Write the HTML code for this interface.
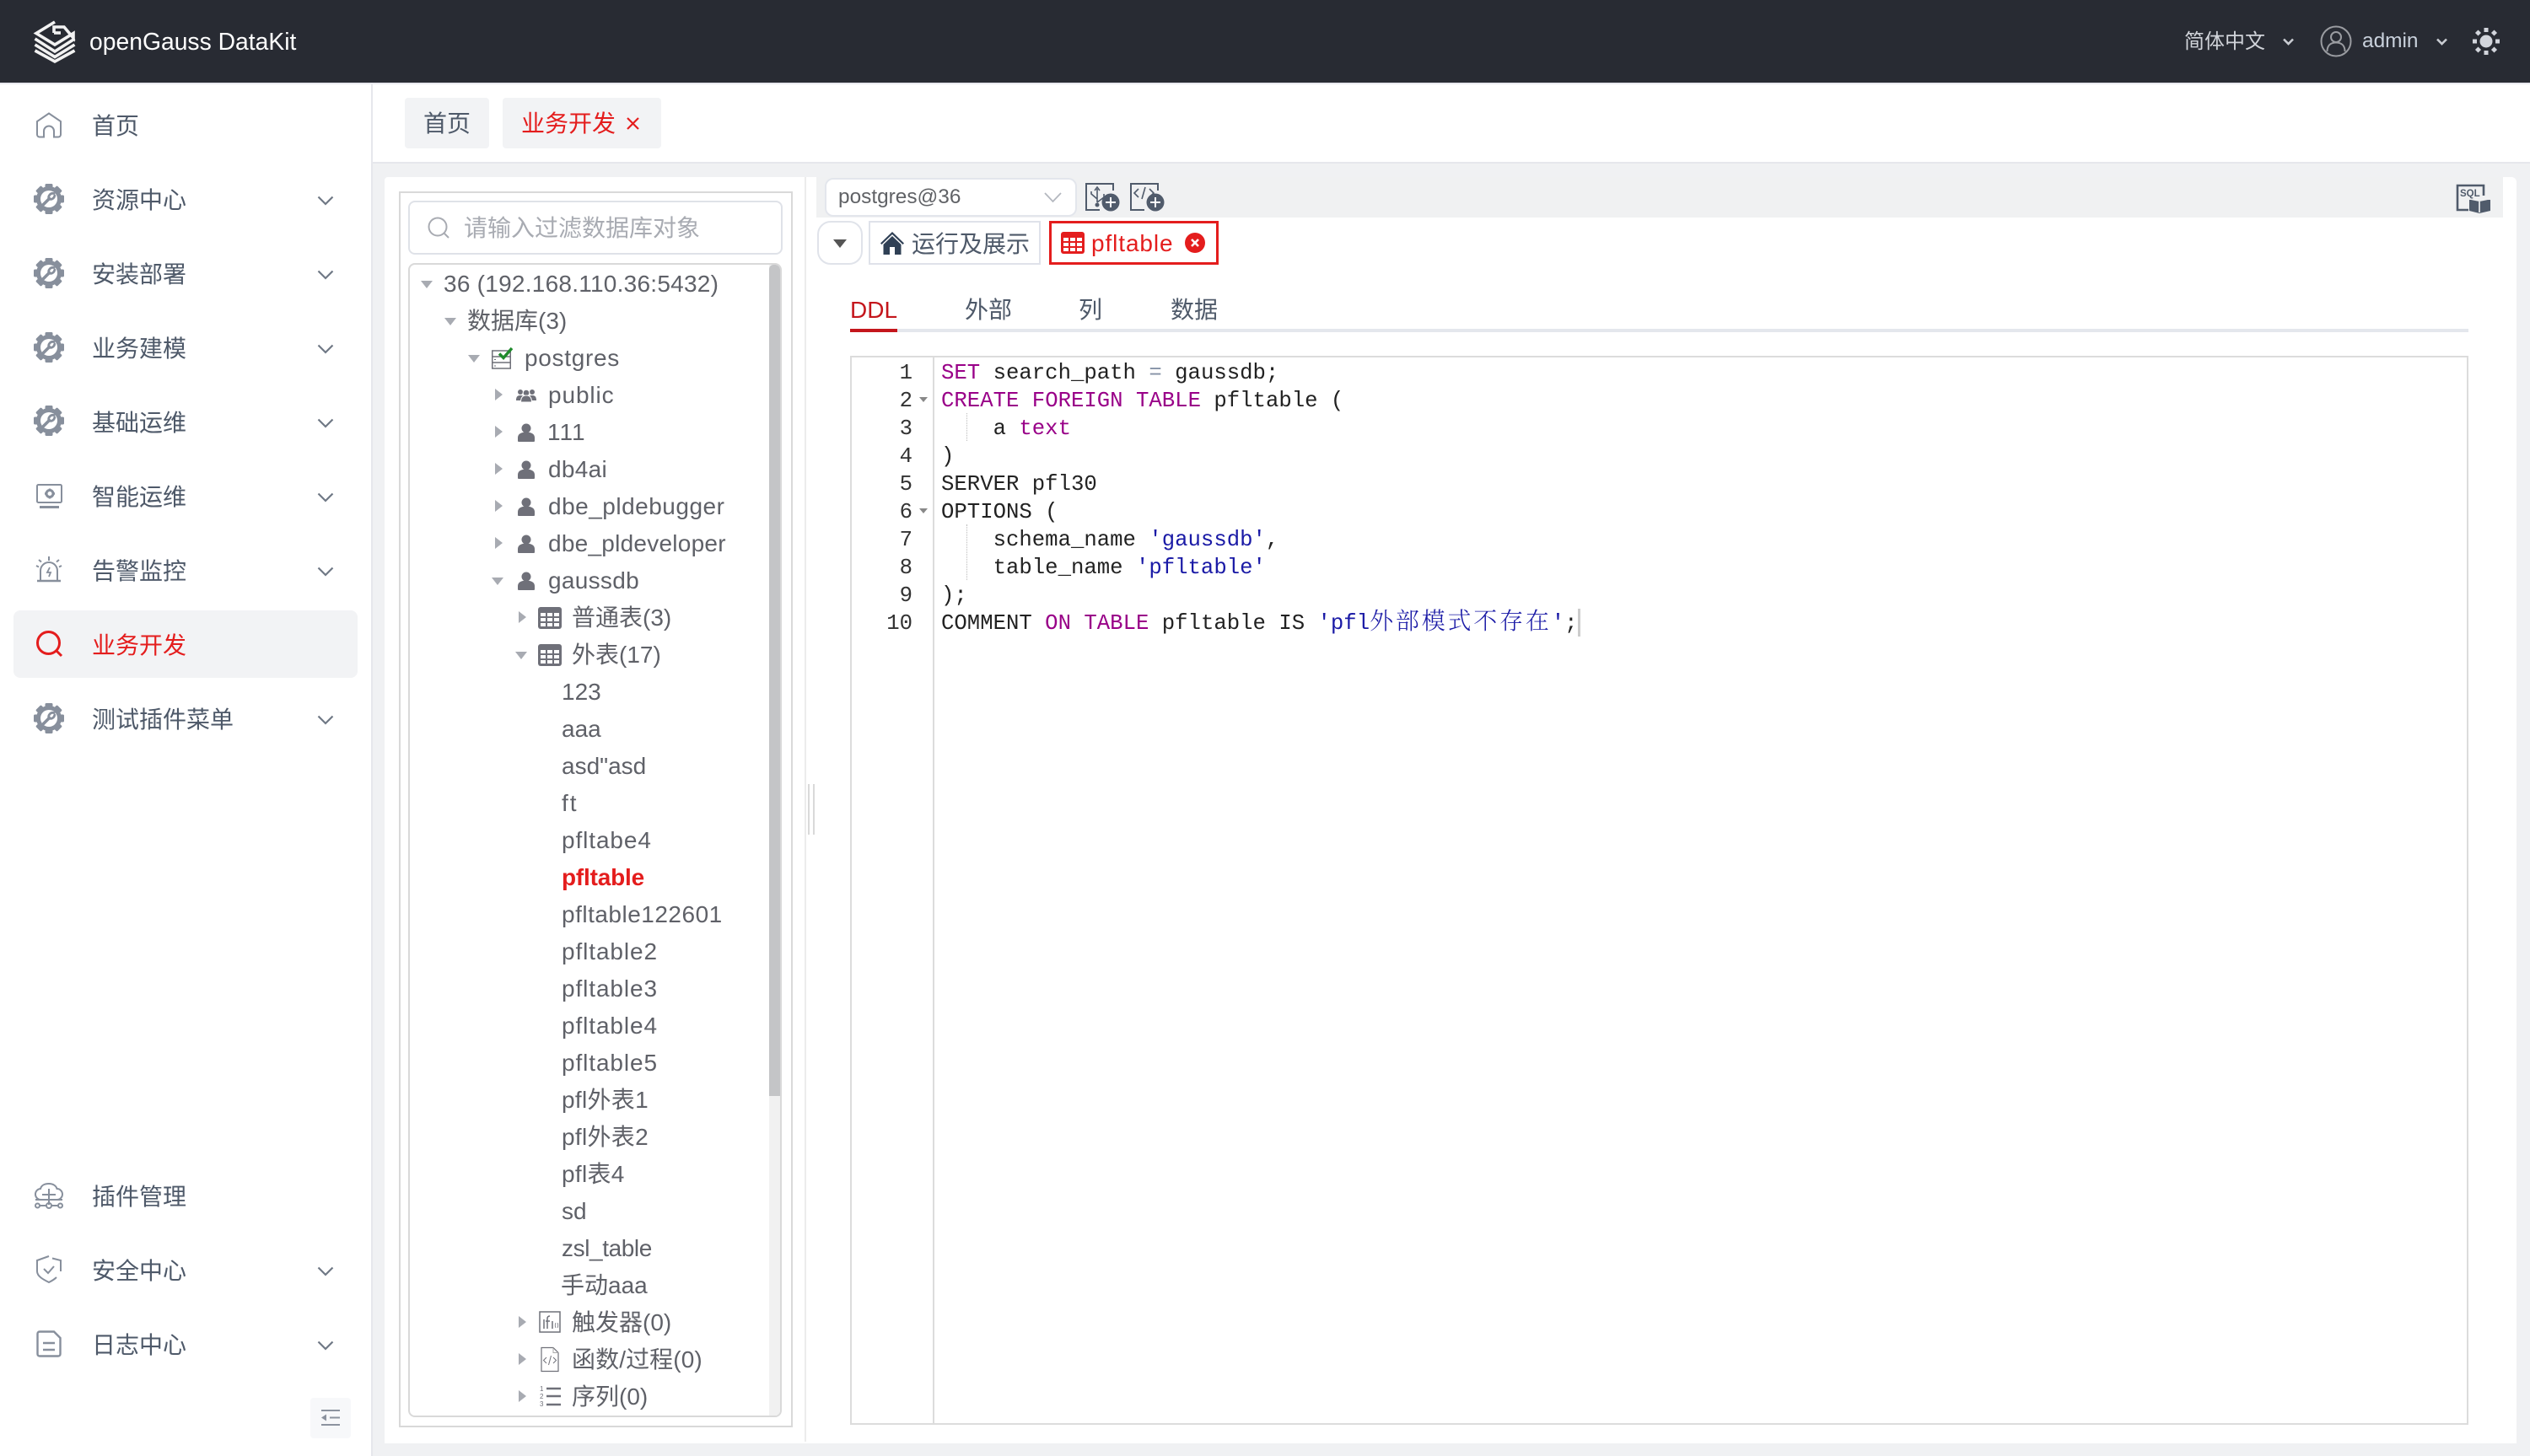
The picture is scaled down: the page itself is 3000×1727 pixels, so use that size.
<!DOCTYPE html>
<html lang="zh"><head><meta charset="utf-8"><title>openGauss DataKit</title>
<style>
*{box-sizing:border-box;margin:0;padding:0}
html,body{width:3000px;height:1727px;overflow:hidden;background:#f0f1f3;font-family:"Liberation Sans","Noto Sans CJK SC",sans-serif}
.a{position:absolute}
.t{position:absolute;white-space:nowrap;font-size:28px}
.m{left:109px;color:#4e5969;line-height:40px}
.r{color:#5f6168;line-height:44px}
.p{letter-spacing:.9px}
.dn{position:absolute;width:0;height:0;border-left:7px solid transparent;border-right:7px solid transparent;border-top:9px solid #a8abb2}
.rt{position:absolute;width:0;height:0;border-top:7.5px solid transparent;border-bottom:7.5px solid transparent;border-left:9px solid #a8abb2}
svg{position:absolute;overflow:visible}
pre{font-family:"Liberation Mono",monospace;font-size:25.67px;line-height:33px}
.k{color:#990088}.s{color:#1a1aa6}.o{color:#8592a6}
.z{font-family:"Noto Serif CJK SC",serif;font-size:28px;letter-spacing:2.8px;font-weight:300;line-height:0}
</style></head><body>
<svg width="0" height="0" style="position:absolute"><defs>
<symbol id="gear" viewBox="0 0 36 36"><g fill="#878f9c"><circle cx="18" cy="18" r="15"/><rect x="13.5" y="0" width="9" height="36" rx="1.5"/><rect x="13.5" y="0" width="9" height="36" rx="1.5" transform="rotate(45 18 18)"/><rect x="13.5" y="0" width="9" height="36" rx="1.5" transform="rotate(90 18 18)"/><rect x="13.5" y="0" width="9" height="36" rx="1.5" transform="rotate(135 18 18)"/></g><circle cx="18" cy="18" r="10" fill="#fff"/><path d="M11.5 24.5L18.5 17.5" stroke="#878f9c" stroke-width="3.6" fill="none" stroke-linecap="round"/><path d="M24 11.5a5 5 0 0 0-6 6.5M24.8 14a5 5 0 0 1-6.8 4" stroke="#878f9c" stroke-width="2.8" fill="none" stroke-linecap="round"/></symbol>
<symbol id="chev" viewBox="0 0 20 12"><path d="M1.5 1.5L10 10L18.5 1.5" fill="none" stroke="#6f7885" stroke-width="2.2"/></symbol>
<symbol id="user" viewBox="0 0 20 22"><circle cx="10" cy="6" r="5.5" fill="#6f7079"/><path d="M0 21v-4c0-4 4-6.500 10-6.500s10 2.500 10 6.500v4c0 .6-.5 1-1 1H1c-.5 0-1-.4-1-1z" fill="#6f7079"/></symbol>
<symbol id="tbl" viewBox="0 0 28 26"><rect width="28" height="26" rx="3" fill="#6f7079"/><g fill="#fff"><rect x="3" y="7" width="6" height="4"/><rect x="11" y="7" width="6" height="4"/><rect x="19" y="7" width="6" height="4"/><rect x="3" y="13" width="6" height="4"/><rect x="11" y="13" width="6" height="4"/><rect x="19" y="13" width="6" height="4"/><rect x="3" y="19" width="6" height="4"/><rect x="11" y="19" width="6" height="4"/><rect x="19" y="19" width="6" height="4"/></g></symbol>
</defs></svg>

<!-- header -->
<div class="a" style="left:0;top:0;width:3000px;height:98px;background:#282b33"></div>
<div class="a" style="left:0;top:98px;width:3000px;height:2px;background:#e8e9ee"></div>
<svg style="left:40px;top:24px" width="50" height="50" viewBox="0 0 50 50" fill="none" stroke="#f2f2f2" stroke-width="3.600">
<path d="M25 2L3 15.500L25 29L47 15.500V21L36 8H24V15"/><path d="M24 15H32"/>
<path d="M1.500 22L25 37L48.500 22"/><path d="M1.500 29L25 43.500L48.500 29"/><path d="M1.500 36L25 49L48.500 36"/></svg>
<div class="t" style="left:106px;top:27px;line-height:44px;color:#fff;font-size:28.3px">openGauss DataKit</div>
<div class="t" style="left:2590px;top:30px;line-height:40px;color:#d0d3d9;font-size:24px">简体中文</div>
<svg style="left:2707px;top:45px" width="13" height="9" viewBox="0 0 13 9"><path d="M1 1.500L6.500 7L12 1.500" fill="none" stroke="#c9ccd2" stroke-width="2.600"/></svg>
<svg style="left:2751px;top:30px" width="38" height="38" viewBox="0 0 38 38" fill="none" stroke="#9a9ca1" stroke-width="2"><circle cx="19" cy="19" r="17.500"/><circle cx="19" cy="14" r="6"/><path d="M8.500 31c0-7 4-10.500 10.500-10.500S29.500 24 29.500 31"/></svg>
<div class="t" style="left:2801px;top:29px;line-height:40px;color:#c9d1dc;font-size:24.4px">admin</div>
<svg style="left:2889px;top:45px" width="13" height="9" viewBox="0 0 13 9"><path d="M1 1.500L6.500 7L12 1.500" fill="none" stroke="#c9ccd2" stroke-width="2.600"/></svg>
<svg style="left:2932px;top:33px" width="32" height="32" viewBox="0 0 32 32" fill="#d2d5dc"><circle cx="16" cy="16" r="7.500"/><rect x="13.500" y="0" width="5" height="5"/><rect x="13.500" y="27" width="5" height="5"/><rect x="0" y="13.500" width="5" height="5"/><rect x="27" y="13.500" width="5" height="5"/><rect x="4" y="3.500" width="5" height="5" transform="rotate(45 6.500 6)"/><rect x="23" y="3.500" width="5" height="5" transform="rotate(45 25.500 6)"/><rect x="4" y="23.500" width="5" height="5" transform="rotate(45 6.500 26)"/><rect x="23" y="23.500" width="5" height="5" transform="rotate(45 25.500 26)"/></svg>

<!-- sidebar -->
<div class="a" style="left:0;top:100px;width:440px;height:1627px;background:#fff"></div>
<div class="a" style="left:440px;top:100px;width:2px;height:1627px;background:#e6e7ec"></div>
<div class="a" style="left:16px;top:724px;width:408px;height:80px;background:#f2f3f5;border-radius:8px"></div>

<svg style="left:43px;top:133px" width="30" height="31" viewBox="0 0 30 31" fill="none" stroke="#878f9c" stroke-width="2"><path d="M9 29.500H4c-1.500 0-3-1-3-3V11L15 1.500L29 11v15.500c0 2-1.500 3-3 3h-5v-7a6 6 0 0 0-12 0z"/></svg>
<svg style="left:40px;top:218px" width="36" height="36"><use href="#gear"/></svg>
<svg style="left:40px;top:306px" width="36" height="36"><use href="#gear"/></svg>
<svg style="left:40px;top:394px" width="36" height="36"><use href="#gear"/></svg>
<svg style="left:40px;top:481px" width="36" height="36"><use href="#gear"/></svg>
<svg style="left:43px;top:574px" width="31" height="30" viewBox="0 0 31 30" fill="none" stroke="#878f9c" stroke-width="2"><rect x="1" y="1" width="29" height="21" rx="1.500"/><path d="M4 27.500H27" stroke-width="3"/><circle cx="16" cy="11.500" r="4" stroke-width="3"/><path d="M16 5.500v2M16 15.500v2M10 11.500h2M20 11.500h2" stroke-width="2.400"/></svg>
<svg style="left:43px;top:660px" width="30" height="30" viewBox="0 0 30 30" fill="none" stroke="#878f9c" stroke-width="2"><path d="M15 0v5M3 4l3 2.500M27 4l-3 2.500M0 11l3 1.500M30 11l-3 1.500" stroke-width="2"/><path d="M5 28V17a10 10 0 0 1 20 0v11"/><path d="M1 29H29" stroke-width="2.500"/><path d="M16 13l-3 6h4l-2 5" stroke-width="1.800"/></svg>
<svg style="left:43px;top:748px" width="31" height="31" viewBox="0 0 31 31" fill="none" stroke="#e41d1d" stroke-width="3"><circle cx="14.500" cy="14.500" r="13"/><path d="M24 24L30 30"/></svg>
<svg style="left:40px;top:834px" width="36" height="36"><use href="#gear"/></svg>
<svg style="left:41px;top:1403px" width="34" height="31" viewBox="0 0 34 31" fill="none" stroke="#878f9c" stroke-width="2"><path d="M9 20H8a6.500 6.500 0 0 1-1-13c1-4 5-6 10-6 5 0 8.500 2.500 9.500 6a6.500 6.500 0 0 1 0 13H25"/><path d="M17 7v19M9 14H25M1 20H33"/><circle cx="17" cy="27" r="3"/><circle cx="3.500" cy="27" r="2.500"/><circle cx="30.500" cy="27" r="2.500"/><path d="M6 27H14M20 27H28"/></svg>
<svg style="left:43px;top:1489px" width="30" height="33" viewBox="0 0 30 33" fill="none" stroke="#878f9c" stroke-width="2"><path d="M15 1L1 6v13c0 6 8 10 14 13 3-1.500 6-3 9-6"/><path d="M19 3.500L29 6v13"/><path d="M9 16l5 5 7-8"/></svg>
<svg style="left:43px;top:1578px" width="30" height="32" viewBox="0 0 30 32" fill="none" stroke="#878f9c" stroke-width="2.400"><path d="M21 1.500H4c-1.500 0-2.500 1-2.500 2.500v24c0 1.500 1 2.500 2.500 2.500h22c1.500 0 2.500-1 2.500-2.500V9z"/><path d="M8 15H22M8 23H22"/></svg>

<div class="t m" style="top:130px">首页</div>
<div class="t m" style="top:218px">资源中心</div>
<div class="t m" style="top:306px">安装部署</div>
<div class="t m" style="top:394px">业务建模</div>
<div class="t m" style="top:482px">基础运维</div>
<div class="t m" style="top:570px">智能运维</div>
<div class="t m" style="top:658px">告警监控</div>
<div class="t m" style="top:746px;color:#e41d1d">业务开发</div>
<div class="t m" style="top:834px">测试插件菜单</div>
<div class="t m" style="top:1400px">插件管理</div>
<div class="t m" style="top:1488px">安全中心</div>
<div class="t m" style="top:1576px">日志中心</div>

<svg style="left:376px;top:232px" width="20" height="12"><use href="#chev"/></svg>
<svg style="left:376px;top:320px" width="20" height="12"><use href="#chev"/></svg>
<svg style="left:376px;top:408px" width="20" height="12"><use href="#chev"/></svg>
<svg style="left:376px;top:496px" width="20" height="12"><use href="#chev"/></svg>
<svg style="left:376px;top:584px" width="20" height="12"><use href="#chev"/></svg>
<svg style="left:376px;top:672px" width="20" height="12"><use href="#chev"/></svg>
<svg style="left:376px;top:848px" width="20" height="12"><use href="#chev"/></svg>
<svg style="left:376px;top:1502px" width="20" height="12"><use href="#chev"/></svg>
<svg style="left:376px;top:1590px" width="20" height="12"><use href="#chev"/></svg>

<div class="a" style="left:368px;top:1658px;width:48px;height:48px;background:#f7f8fa;border-radius:4px"></div>
<svg style="left:381px;top:1672px" width="22" height="20" viewBox="0 0 22 20" fill="#8c939f"><rect x="0" y="0" width="22" height="2"/><rect x="0" y="17" width="22" height="2"/><rect x="10" y="8.500" width="12" height="2"/><path d="M0 9.500L6 5.500V13.500z"/></svg>

<!-- tab bar -->
<div class="a" style="left:442px;top:100px;width:2558px;height:92px;background:#fff"></div>
<div class="a" style="left:442px;top:192px;width:2558px;height:2px;background:#e6e7ec"></div>
<div class="a" style="left:480px;top:116px;width:100px;height:60px;background:#f2f3f5;border-radius:4px"></div>
<div class="a" style="left:596px;top:116px;width:188px;height:60px;background:#f2f3f5;border-radius:4px"></div>
<div class="t" style="left:502px;top:127px;line-height:40px;color:#4e5969">首页</div>
<div class="t" style="left:618px;top:127px;line-height:40px;color:#e41d1d">业务开发</div>
<svg style="left:743px;top:139px" width="15" height="15" viewBox="0 0 15 15"><path d="M1 1L14 14M14 1L1 14" stroke="#e41d1d" stroke-width="2.200"/></svg>

<!-- main white -->
<div class="a" style="left:456px;top:210px;width:2528px;height:1502px;background:#fff;border-radius:4px 6px 0 0"></div>

<!-- left panel -->
<div class="a" style="left:473px;top:227px;width:467px;height:1466px;border:2px solid #d9d9d9"></div>
<div class="a" style="left:484px;top:238px;width:444px;height:64px;border:2px solid #dfe2e8;border-radius:8px"></div>
<svg style="left:507px;top:257px" width="26" height="26" viewBox="0 0 26 26" fill="none" stroke="#a8abb2" stroke-width="2"><circle cx="12" cy="12" r="10.500"/><path d="M20 20L25 25"/></svg>
<div class="t" style="left:550px;top:251px;line-height:40px;color:#a8abb2">请输入过滤数据库对象</div>
<div class="a" style="left:484px;top:312px;width:443px;height:1369px;border:2px solid #d9d9d9;border-radius:8px;overflow:hidden">
 <div class="a" style="left:426px;top:0;width:15px;height:1367px;background:#f1f1f1"></div>
 <div class="a" style="left:426px;top:0;width:15px;height:986px;background:#c4c5c7;border-radius:5px 5px 0 0"></div>
</div>

<div class="dn" style="left:499px;top:333px"></div>
<div class="t r" style="left:526px;top:315px;letter-spacing:.25px">36 (192.168.110.36:5432)</div>
<div class="dn" style="left:527px;top:377px"></div>
<div class="t r" style="left:554px;top:359px">数据库(3)</div>
<div class="dn" style="left:555px;top:421px"></div>
<svg style="left:583px;top:412px" width="25" height="26" viewBox="0 0 25 26" fill="none"><rect x=".75" y="4" width="21.500" height="21" fill="#fff" stroke="#6f7079" stroke-width="1.500"/><path d="M1 11H22M1 18H22" stroke="#6f7079" stroke-width="1.500"/><path d="M3 22h2M3 14.500h2" stroke="#6f7079"/><path d="M9 7.500l5 5L24 1" stroke="#1f8a2c" stroke-width="3.400"/></svg>
<div class="t r" style="left:622px;top:403px;letter-spacing:.7px">postgres</div>

<div class="rt" style="left:587px;top:461px"></div>
<svg style="left:612px;top:461px" width="24" height="16" viewBox="0 0 24 16" fill="#6f7079"><circle cx="5" cy="4" r="3"/><circle cx="19" cy="4" r="3"/><path d="M0 14c0-5 2-6 5-6s5 1 5 6zM14 14c0-5 2-6 5-6s5 1 5 6z"/><circle cx="12" cy="5" r="3.800" stroke="#fff"/><path d="M5.500 16c0-6 3-8 6.500-8s6.500 2 6.500 8z" stroke="#fff"/></svg>
<div class="t r p" style="left:650px;top:447px">public</div>

<div class="rt" style="left:587px;top:505px"></div>
<svg style="left:614px;top:502px" width="20" height="22"><use href="#user"/></svg>
<div class="t r" style="left:649px;top:491px;letter-spacing:1px">111</div>
<div class="rt" style="left:587px;top:549px"></div>
<svg style="left:614px;top:546px" width="20" height="22"><use href="#user"/></svg>
<div class="t r" style="left:650px;top:535px;letter-spacing:.3px">db4ai</div>
<div class="rt" style="left:587px;top:593px"></div>
<svg style="left:614px;top:590px" width="20" height="22"><use href="#user"/></svg>
<div class="t r" style="left:650px;top:579px;letter-spacing:.5px">dbe_pldebugger</div>
<div class="rt" style="left:587px;top:637px"></div>
<svg style="left:614px;top:634px" width="20" height="22"><use href="#user"/></svg>
<div class="t r" style="left:650px;top:623px;letter-spacing:.25px">dbe_pldeveloper</div>
<div class="dn" style="left:583px;top:685px"></div>
<svg style="left:614px;top:678px" width="20" height="22"><use href="#user"/></svg>
<div class="t r" style="left:650px;top:667px;letter-spacing:.3px">gaussdb</div>

<div class="rt" style="left:615px;top:725px"></div>
<svg style="left:638px;top:720px" width="28" height="26"><use href="#tbl"/></svg>
<div class="t r" style="left:678px;top:711px">普通表(3)</div>
<div class="dn" style="left:611px;top:773px"></div>
<svg style="left:638px;top:764px" width="28" height="26"><use href="#tbl"/></svg>
<div class="t r" style="left:678px;top:755px">外表(17)</div>

<div class="t r" style="left:666px;top:799px">123</div>
<div class="t r" style="left:666px;top:843px">aaa</div>
<div class="t r" style="left:666px;top:887px">asd"asd</div>
<div class="t r" style="left:666px;top:931px;letter-spacing:2px">ft</div>
<div class="t r p" style="left:666px;top:975px">pfltabe4</div>
<div class="t r" style="left:666px;top:1019px;color:#e41d1d;font-weight:700;letter-spacing:-.2px">pfltable</div>
<div class="t r" style="left:666px;top:1063px;letter-spacing:.5px">pfltable122601</div>
<div class="t r p" style="left:666px;top:1107px">pfltable2</div>
<div class="t r p" style="left:666px;top:1151px">pfltable3</div>
<div class="t r p" style="left:666px;top:1195px">pfltable4</div>
<div class="t r p" style="left:666px;top:1239px">pfltable5</div>
<div class="t r" style="left:666px;top:1283px;letter-spacing:.3px">pfl外表1</div>
<div class="t r" style="left:666px;top:1327px;letter-spacing:.3px">pfl外表2</div>
<div class="t r" style="left:666px;top:1371px;letter-spacing:.3px">pfl表4</div>
<div class="t r" style="left:666px;top:1415px">sd</div>
<div class="t r" style="left:666px;top:1459px;letter-spacing:-.4px">zsl_table</div>
<div class="t r" style="left:665px;top:1503px">手动aaa</div>

<div class="rt" style="left:615px;top:1561px"></div>
<svg style="left:639px;top:1555px" width="26" height="26" viewBox="0 0 26 26" fill="none" stroke="#6f7079" stroke-width="1.500"><rect x="1" y="1" width="24" height="24"/><path d="M6 10V21M10 21V9c0-2 1-3 3-3M8 12h5M16 21V12" stroke-width="1.500"/><path d="M20 14c-1 2-1 4 0 6M22 14c1 2 1 4 0 6" stroke-width=".8"/></svg>
<div class="t r" style="left:678px;top:1547px">触发器(0)</div>
<div class="rt" style="left:615px;top:1605px"></div>
<svg style="left:641px;top:1598px" width="22" height="29" viewBox="0 0 22 29" fill="none" stroke="#6f7079"><path d="M1 .5H15L21 6.500V28.500H1z" stroke-width="1.200"/><path d="M15 .5V6.500H21" stroke="#aaa"/><path d="M7 12L3.500 15.500L7 19M15 12L18.500 15.500L15 19M12.500 10L9.500 21" stroke-width="1"/></svg>
<div class="t r" style="left:678px;top:1591px;letter-spacing:.1px">函数/过程(0)</div>
<div class="rt" style="left:615px;top:1649px"></div>
<svg style="left:640px;top:1643px" width="25" height="26" viewBox="0 0 25 26"><path d="M8 4H25M8 13H25M8 23H25" stroke="#6f7079" stroke-width="2.500"/><text x="0" y="7" font-size="8" fill="#6f7079" font-family="Liberation Sans">1</text><text x="0" y="16" font-size="8" fill="#6f7079" font-family="Liberation Sans">2</text><text x="0" y="25" font-size="8" fill="#6f7079" font-family="Liberation Sans">3</text></svg>
<div class="t r" style="left:678px;top:1635px">序列(0)</div>

<!-- splitter -->
<div class="a" style="left:954px;top:210px;width:2px;height:1500px;background:#ececec"></div>
<div class="a" style="left:958px;top:930px;width:2px;height:60px;background:#d9d9d9"></div>
<div class="a" style="left:964px;top:930px;width:2px;height:60px;background:#d9d9d9"></div>

<!-- right toolbar -->
<div class="a" style="left:968px;top:210px;width:2000px;height:48px;background:#f0f1f2"></div>
<div class="a" style="left:978px;top:211px;width:299px;height:46px;background:#fff;border:2px solid #e3e6ec;border-radius:10px"></div>
<div class="t" style="left:994px;top:214px;line-height:40px;font-size:24.4px;color:#606266">postgres@36</div>
<svg style="left:1238px;top:228px" width="21" height="12" viewBox="0 0 21 12"><path d="M1 1L10.500 11L20 1" fill="none" stroke="#b4b8bf" stroke-width="1.800"/></svg>

<svg style="left:1286px;top:216px" width="44" height="36" viewBox="0 0 44 36" fill="none" stroke="#505b6b" stroke-width="2"><path d="M34 10V2H2V33H18"/><path d="M15 8V24M12 10l3-4 3 4M15 20L8 14v-3M15 24l8-6v-4" stroke-width="1.600"/><circle cx="15" cy="27" r="2.500" fill="#505b6b" stroke="none"/><circle cx="31" cy="24" r="10.500" fill="#505b6b" stroke="#fff" stroke-width="0"/><path d="M31 18V30M25 24H37" stroke="#fff" stroke-width="2"/></svg>
<svg style="left:1339px;top:216px" width="44" height="36" viewBox="0 0 44 36" fill="none" stroke="#505b6b" stroke-width="2"><path d="M34 10V2H2V33H18"/><path d="M11 8L6 13l5 5M24 8l5 5-5 5M19 6L15 20" stroke-width="1.600"/><circle cx="31" cy="24" r="10.500" fill="#505b6b" stroke-width="0"/><path d="M31 18V30M25 24H37" stroke="#fff" stroke-width="2"/></svg>
<svg style="left:2912px;top:218px" width="42" height="36" viewBox="0 0 42 36"><path d="M33 14V2H2V31H15" fill="none" stroke="#505b6b" stroke-width="2.600"/><text x="5" y="15" font-size="11.500" font-weight="700" fill="#505b6b" font-family="Liberation Sans">SQL</text><path d="M18 19l10 2 10-2 3 0v13l-13 3-12-3V19z" fill="#505b6b"/><path d="M28 21V34" stroke="#fff" stroke-width="1.500"/></svg>

<!-- doc tabs -->
<div class="a" style="left:969px;top:262px;width:54px;height:52px;border:2px solid #e0e3ea;border-radius:16px"></div>
<div class="a" style="left:988px;top:284px;width:0;height:0;border-left:8px solid transparent;border-right:8px solid transparent;border-top:10px solid #555"></div>
<div class="a" style="left:1030px;top:262px;width:204px;height:52px;border:2px solid #dfe2ea"></div>
<svg style="left:1044px;top:274px" width="28" height="28" viewBox="0 0 28 28"><path d="M14 1L0 14.500l1.500 1.500L14 4l12.500 12 1.500-1.500z" fill="#2f4055"/><path d="M3.500 16L14 6l10.500 10v12H17V19h-6v9H3.500z" fill="#2f4055"/></svg>
<div class="t" style="left:1081px;top:270px;line-height:40px;color:#4e5969">运行及展示</div>
<div class="a" style="left:1244px;top:262px;width:201px;height:52px;border:3px solid #e41d1d"></div>
<svg style="left:1258px;top:275px" width="28" height="26" viewBox="0 0 28 26"><rect width="28" height="26" rx="3" fill="#e41d1d"/><g fill="#fff"><rect x="3" y="7" width="6" height="4"/><rect x="11" y="7" width="6" height="4"/><rect x="19" y="7" width="6" height="4"/><rect x="3" y="13" width="6" height="4"/><rect x="11" y="13" width="6" height="4"/><rect x="19" y="13" width="6" height="4"/><rect x="3" y="19" width="6" height="4"/><rect x="11" y="19" width="6" height="4"/><rect x="19" y="19" width="6" height="4"/></g></svg>
<div class="t p" style="left:1294px;top:269px;line-height:40px;color:#e41d1d">pfltable</div>
<svg style="left:1405px;top:276px" width="24" height="24" viewBox="0 0 24 24"><circle cx="12" cy="12" r="12" fill="#e41d1d"/><path d="M8 8l8 8M16 8l-8 8" stroke="#fff" stroke-width="2.600"/></svg>

<!-- sub tabs -->
<div class="t" style="left:1008px;top:348px;line-height:40px;color:#c4161c">DDL</div>
<div class="t" style="left:1144px;top:348px;line-height:40px;color:#4e5969">外部</div>
<div class="t" style="left:1279px;top:348px;line-height:40px;color:#4e5969">列</div>
<div class="t" style="left:1388px;top:348px;line-height:40px;color:#4e5969">数据</div>
<div class="a" style="left:1008px;top:390px;width:1919px;height:4px;background:#e4e7ed"></div>
<div class="a" style="left:1008px;top:390px;width:56px;height:4px;background:#c4161c"></div>

<!-- code box -->
<div class="a" style="left:1008px;top:422px;width:1919px;height:1268px;border:2px solid #dcdcdc"></div>
<div class="a" style="left:1106px;top:424px;width:2px;height:1264px;background:#dcdcdc"></div>
<pre class="a" style="left:1020px;top:426px;width:62px;text-align:right;color:#333">1
2
3
4
5
6
7
8
9
10</pre>
<div class="a" style="left:1090px;top:471px;width:0;height:0;border-left:5px solid transparent;border-right:5px solid transparent;border-top:6px solid #888"></div>
<div class="a" style="left:1090px;top:603px;width:0;height:0;border-left:5px solid transparent;border-right:5px solid transparent;border-top:6px solid #888"></div>
<div class="a" style="left:1146px;top:490px;height:33px;border-left:1px dotted #bbb"></div>
<div class="a" style="left:1146px;top:622px;height:66px;border-left:1px dotted #bbb"></div>
<pre class="a" style="left:1116px;top:426px;color:#222"><span class="k">SET</span> search_path <span class="o">=</span> gaussdb;
<span class="k">CREATE</span> <span class="k">FOREIGN</span> <span class="k">TABLE</span> pfltable (
    a <span class="k">text</span>
)
SERVER pfl30
OPTIONS (
    schema_name <span class="s">'gaussdb'</span>,
    table_name <span class="s">'pfltable'</span>
);
COMMENT <span class="k">ON</span> <span class="k">TABLE</span> pfltable IS <span class="s">'pfl<span class="z">外部模式不存在</span>'</span>;</pre>
<div class="a" style="left:1871px;top:722px;width:3px;height:33px;background:#ccc"></div>
</body></html>
